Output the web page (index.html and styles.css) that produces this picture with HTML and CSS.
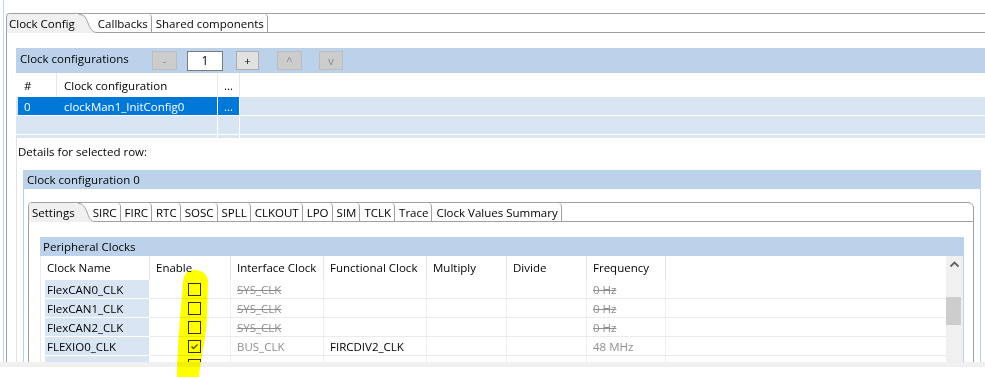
FILE: index.html
```html
<!DOCTYPE html>
<html lang="en">
<head>
    <meta charset="UTF-8">
    <title>Clock Config</title>
    <link rel="stylesheet" href="styles.css">
</head>
<body>
    <div class="frame">
        <div class="tabs outer">
            <div class="tab sel">Clock Config</div>
            <svg class="tab-curve" viewBox="0 0 20 19"><path class="fill" d="M0 0 H2 C8 0 9 4 11 9 C13 14 15 18.5 20 18.5 V19 H0 Z"/><path class="edge" d="M2 0.5 C8 0.5 9 4 11 9 C13 14 15 18.5 20 18.5"/></svg>
            <div class="tab">Callbacks</div>
            <div class="tab">Shared components</div>
        </div>

        <div class="folder outer-body">
            <div class="bar">
                <span class="bar-title">Clock configurations</span>
                <span class="btn off b-minus">-</span>
                <span class="num">1</span>
                <span class="btn b-plus">+</span>
                <span class="btn off b-up">^</span>
                <span class="btn off b-down">v</span>
            </div>

            <div class="cfg">
                <div class="cfg-head">
                    <div class="ch">#</div>
                    <div class="ch">Clock configuration</div>
                    <div class="ch">...</div>
                    <div></div>
                </div>
                <div class="cfg-row sel">
                    <div class="cc">0</div>
                    <div class="cc">clockMan1_InitConfig0</div>
                    <div class="cc">...</div>
                    <div></div>
                </div>
                <div class="cfg-row">
                    <div class="cc"></div>
                    <div class="cc"></div>
                    <div class="cc"></div>
                    <div></div>
                </div>
                <div class="cfg-row">
                    <div class="cc"></div>
                    <div class="cc"></div>
                    <div class="cc"></div>
                    <div></div>
                </div>
            </div>

            <div class="details">
                <p class="details-label">Details for selected row:</p>
                <div class="group">
                    <div class="group-head">Clock configuration 0</div>
                    <div class="group-body">
                        <div class="tabs inner">
                            <div class="tab sel">Settings</div>
                            <svg class="tab-curve small" viewBox="0 0 18 19"><path class="fill" d="M0 0 H1 C6 0 8 4 10 9 C12 14 13 18.5 18 18.5 V19 H0 Z"/><path class="edge" d="M1 0.5 C6 0.5 8 4 10 9 C12 14 13 18.5 18 18.5"/></svg>
                            <div class="tab">SIRC</div>
                            <div class="tab">FIRC</div>
                            <div class="tab">RTC</div>
                            <div class="tab">SOSC</div>
                            <div class="tab">SPLL</div>
                            <div class="tab">CLKOUT</div>
                            <div class="tab">LPO</div>
                            <div class="tab">SIM</div>
                            <div class="tab">TCLK</div>
                            <div class="tab">Trace</div>
                            <div class="tab">Clock Values Summary</div>
                        </div>
                        <div class="folder inner-body">
                            <div class="section">
                                <div class="sec-head">Peripheral Clocks</div>
                                <div class="sec-body">
                                    <div class="clocks">
                                        <div class="hd">Clock Name</div>
                                        <div class="hd">Enable</div>
                                        <div class="hd">Interface Clock</div>
                                        <div class="hd">Functional Clock</div>
                                        <div class="hd">Multiply</div>
                                        <div class="hd">Divide</div>
                                        <div class="hd">Frequency</div>
                                        <div class="hd last"></div>

                                        <div class="td name">FlexCAN0_CLK</div>
                                        <div class="td chk"><span class="box"></span></div>
                                        <div class="td dim"><s>SYS_CLK</s></div>
                                        <div class="td"></div>
                                        <div class="td"></div>
                                        <div class="td"></div>
                                        <div class="td dim"><s>0 Hz</s></div>
                                        <div class="td last"></div>

                                        <div class="td name">FlexCAN1_CLK</div>
                                        <div class="td chk"><span class="box"></span></div>
                                        <div class="td dim"><s>SYS_CLK</s></div>
                                        <div class="td"></div>
                                        <div class="td"></div>
                                        <div class="td"></div>
                                        <div class="td dim"><s>0 Hz</s></div>
                                        <div class="td last"></div>

                                        <div class="td name">FlexCAN2_CLK</div>
                                        <div class="td chk"><span class="box"></span></div>
                                        <div class="td dim"><s>SYS_CLK</s></div>
                                        <div class="td"></div>
                                        <div class="td"></div>
                                        <div class="td"></div>
                                        <div class="td dim"><s>0 Hz</s></div>
                                        <div class="td last"></div>

                                        <div class="td name">FLEXIO0_CLK</div>
                                        <div class="td chk"><span class="box"><svg viewBox="0 0 11 11"><path d="M2.5 5.5 L4.5 7.5 L8.5 3.5"/></svg></span></div>
                                        <div class="td dim">BUS_CLK</div>
                                        <div class="td">FIRCDIV2_CLK</div>
                                        <div class="td"></div>
                                        <div class="td"></div>
                                        <div class="td dim">48 MHz</div>
                                        <div class="td last"></div>

                                        <div class="td name">FTFC0_CLK</div>
                                        <div class="td chk"><span class="box"></span></div>
                                        <div class="td dim">SLOW_CLK</div>
                                        <div class="td"></div>
                                        <div class="td"></div>
                                        <div class="td"></div>
                                        <div class="td dim">0 Hz</div>
                                        <div class="td last"></div>
                                    </div>
                                    <div class="vscroll">
                                        <svg class="arrow" viewBox="0 0 17 17"><path d="M4.5 10.5 L8.5 6.5 L12.5 10.5"/></svg>
                                        <div class="thumb"></div>
                                    </div>
                                </div>
                            </div>
                        </div>
                    </div>
                </div>
            </div>
        </div>
    </div>
    <div class="hbar"></div>

    <!-- yellow marker stroke drawn over the Enable column -->
    <svg class="marker" viewBox="0 0 985 377"><path d="M194 270 C202 270 208 274 208 282 L207 318 C206 338 201 356 199 377 L177 377 C177 360 179 330 181 305 L183 282 C184 274 187 270 194 270 Z"/></svg>
</body>
</html>
```

FILE: styles.css
```css
* { box-sizing: border-box; }
body { margin: 0; height: 377px; overflow: hidden; position: relative; background: #fff; color: #000; font: 11.5px "Open Sans", "Segoe UI", sans-serif; }

.frame { height: 362px; overflow: hidden; margin-left: 3px; border-left: 1px solid #c5d7ed; padding-left: 2px; }
.hbar { height: 5px; background: #f0f0f0; }

/* tab strips */
.tabs { display: flex; height: 20px; border: 1px solid #a0a0a0; border-right: 0; border-top-left-radius: 4px; }
.tabs.outer { margin-top: 13px; }
.tabs.inner { border-right: 1px solid #a0a0a0; border-top-right-radius: 6px; }
.tab { display: flex; align-items: center; padding: 0 3px 0 4px; border-right: 1px solid #a0a0a0; border-top-right-radius: 4px; white-space: nowrap; }
.tab.sel { background: #f0f0f0; border-right: 0; margin-bottom: -1px; padding: 0 2px 0 2px; border-top-left-radius: 3px; }
.inner .tab.sel { padding-left: 3px; }
.tab-curve { flex: none; width: 20px; height: 19px; margin-bottom: -1px; margin-right: -3px; }
.tab-curve.small { width: 18px; margin-right: -6px; }
.tab-curve .fill { fill: #f0f0f0; }
.tab-curve .edge { fill: none; stroke: #a0a0a0; stroke-width: 1; }

.folder { border-left: 1px solid #a0a0a0; }
.outer-body { padding: 15px 0 0 9px; height: 340px; }

/* clock configurations bar */
.bar { height: 25px; background: #bcd2ea; display: flex; align-items: center; padding-left: 4px; }
.bar-title { width: 132px; margin-bottom: 4px; }
.btn { display: flex; align-items: center; justify-content: center; height: 19px; width: 25px; border: 1px solid #bdbdbd; background: #cccccc; color: #8a8a8a; font-size: 11px; }
.b-plus { margin-left: 13px; width: 23px; background: #e1e1e1; border-color: #adadad; color: #000; }
.b-up { margin-left: 18px; }
.b-down { margin-left: 17px; width: 24px; }
.num { margin-left: 10px; width: 36px; height: 20px; background: #fff; border: 1px solid #7a7a7a; display: flex; align-items: center; justify-content: center; font-size: 12px; }

/* configurations table */
.cfg { height: 65px; overflow: hidden; }
.cfg-head { display: grid; grid-template-columns: 41px 161px 22px 1fr; height: 24px; }
.ch { display: flex; align-items: center; padding-left: 7px; border-right: 1px solid #e8e8e8; }
.ch:first-child { padding-left: 8px; }
.ch:nth-child(3) { padding-left: 6px; }
.cfg-row { display: grid; grid-template-columns: 39px 161px 22px 1fr; height: 19px; padding-left: 2px; background: #d9e5f3; border-bottom: 1px solid #fff; }
.cc { display: flex; align-items: center; padding-left: 7px; border-right: 1px solid #fff; }
.cc:first-child { padding-left: 6px; border-right: 0; }
.cc:nth-child(3) { padding-left: 6px; }
.cfg-row.sel .cc { background: #0078d7; color: #fff; }

/* details */
.details { border-left: 1px solid #e3e3e3; height: 300px; }
.details-label { margin: 0; height: 32px; padding: 6px 0 0 1px; line-height: 16px; }
.group { margin: 0 4px 0 6px; }
.group-head { height: 19px; background: #bcd2ea; padding-left: 4px; display: flex; align-items: center; }
.group-body { border-left: 1px solid #bcd2ea; border-right: 1px solid #bcd2ea; padding: 13px 6px 0 4px; height: 200px; }
.inner-body { border-right: 1px solid #a0a0a0; padding: 15px 9px 0 11px; height: 200px; }

/* peripheral clocks */
.sec-head { height: 19px; background: #bcd2ea; padding-left: 3px; display: flex; align-items: center; }
.sec-body { display: flex; border-left: 1px solid #e6edf6; border-right: 1px solid #bcd2ea; height: 140px; }
.clocks { flex: 1; display: grid; grid-template-columns: 109px 81px 93px 103px 80px 80px 79px 1fr; grid-auto-rows: 19px; grid-template-rows: 24px; align-content: start; }
.hd { display: flex; align-items: center; padding-left: 6px; padding-bottom: 1px; border-right: 1px solid #e5e5e5; }
.hd.last { border-right: 0; }
.td { display: flex; align-items: center; padding-left: 6px; border-right: 1px solid #f0f0f0; border-bottom: 1px solid #ebebeb; white-space: nowrap; }
.td.last { border-right: 0; }
.td.name { background: #d9e5f3; border-left: 4px solid #fff; border-bottom-color: #fff; border-right-color: #fff; padding-left: 2px; }
.td.dim { color: #8f8f8f; }
.td.dim s { text-decoration-thickness: 1px; }
.td.chk { padding-left: 38px; }
.box { width: 13px; height: 13px; border: 1px solid #333; background: #fff; display: block; }
.box svg { display: block; width: 11px; height: 11px; }
.box path { fill: none; stroke: #555; stroke-width: 1.3; }

.vscroll { flex: none; width: 17px; background: #f0f0f0; }
.arrow { display: block; width: 17px; height: 17px; }
.arrow path { fill: none; stroke: #606060; stroke-width: 1.8; }
.thumb { width: 15px; height: 28px; margin-top: 24px; background: #cdcdcd; }

/* highlighter stroke */
.marker { position: absolute; left: 0; top: 0; width: 985px; height: 377px; pointer-events: none; mix-blend-mode: multiply; }
.marker path { fill: #ffff00; }
```
